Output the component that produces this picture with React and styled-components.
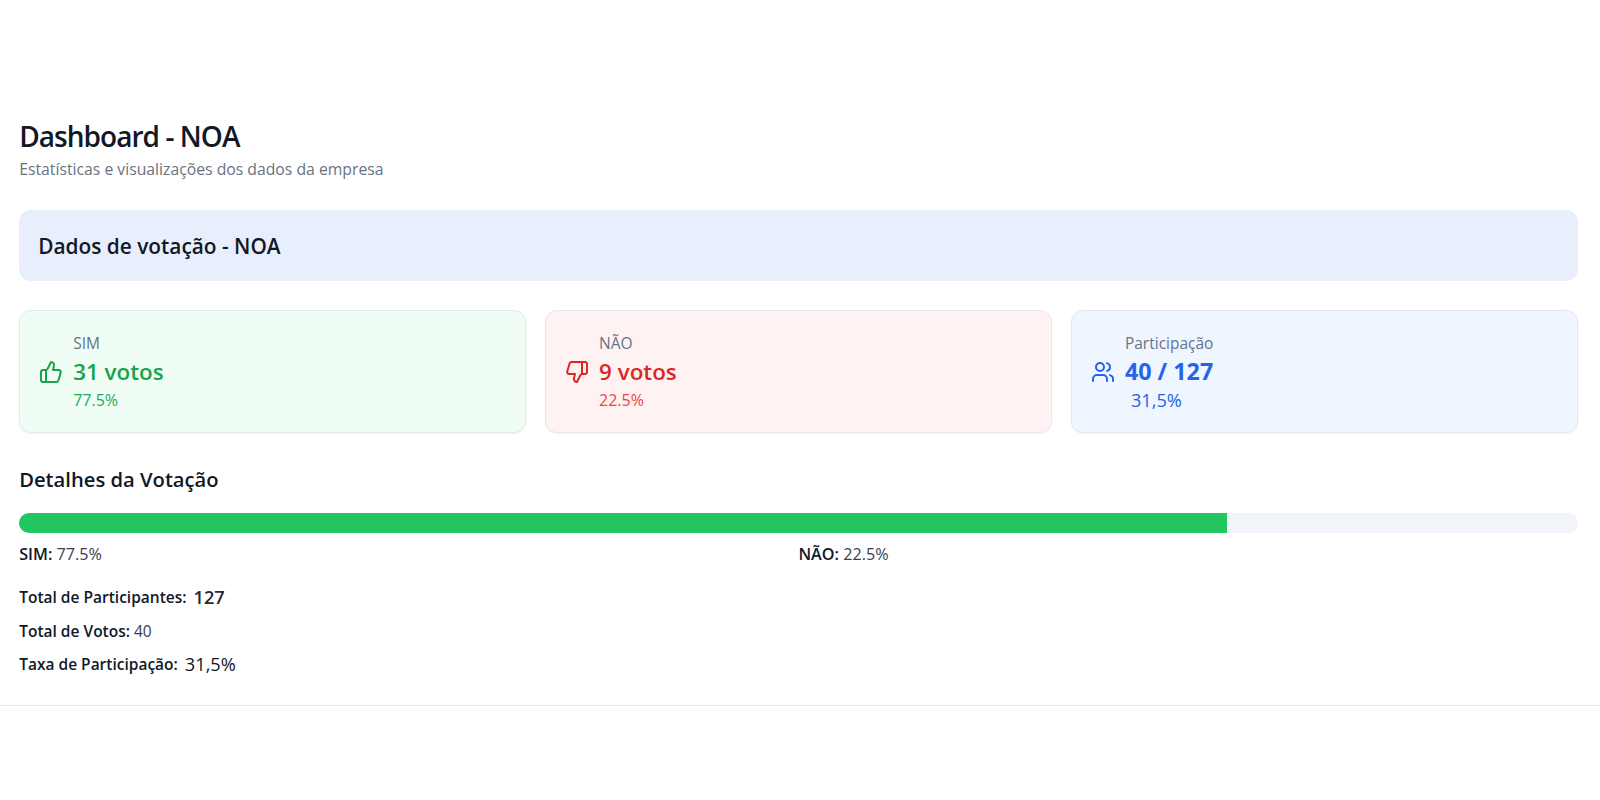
import React from 'react';
import styled, { createGlobalStyle } from 'styled-components';
import { ThumbsUp, ThumbsDown, Users } from 'lucide-react';

const GlobalStyle = createGlobalStyle`
    html, body {
        margin: 0;
        padding: 0;
        background: #fff;
        font-family: "Open Sans", "Noto Sans", sans-serif;
    }
`;

const Page = styled.div`
    padding-top: 118px;
    min-height: 800px;
    box-sizing: border-box;
`;

const Section = styled.section`
    padding: 0 22.4px 28px 19.2px;
    border-bottom: 1px solid #e5e7eb;
`;

const Title = styled.h1`
    margin: 0 0 4px;
    font-size: 28px;
    line-height: 36px;
    font-weight: 600;
    letter-spacing: -0.95px;
    color: #111827;
`;

const Subtitle = styled.p`
    margin: 0;
    font-size: 15.75px;
    line-height: 22px;
    color: #6b7280;
`;

const Banner = styled.div`
    margin-top: 30px;
    height: 71px;
    display: flex;
    align-items: center;
    padding: 0 19px;
    border-radius: 12px;
    background: #e8eefc;
`;

const BannerTitle = styled.h2`
    margin: 0;
    font-size: 20.85px;
    font-weight: 600;
    color: #111827;
`;

const Cards = styled.div`
    margin-top: 29px;
    display: grid;
    grid-template-columns: repeat(3, 1fr);
    gap: 19.2px;
`;

const Card = styled.div`
    height: 123px;
    box-sizing: border-box;
    display: flex;
    align-items: center;
    gap: 10px;
    padding: 0 19px;
    border: 1px solid #e2e8f0;
    border-radius: 12px;
    box-shadow: 0 1px 2px rgba(0, 0, 0, 0.05);
    background: ${p => p.$bg};
    color: ${p => p.$color};
`;

const CardBody = styled.div`
    display: flex;
    flex-direction: column;
`;

const CardLabel = styled.span`
    font-size: 15.5px;
    line-height: 21px;
    color: #64748b;
`;

const CardValue = styled.span`
    font-size: ${p => p.$size || 22.4}px;
    line-height: 35px;
    font-weight: ${p => p.$weight || 600};
`;

const CardPercent = styled.span`
    font-size: ${p => p.$size || 16}px;
    line-height: 22px;
    margin-left: ${p => p.$indent || 0}px;
    color: ${p => p.$color};
`;

const DetailsTitle = styled.h3`
    margin: 31px 0 0;
    font-size: 20.2px;
    line-height: 30px;
    font-weight: 600;
    color: #111827;
`;

const Track = styled.div`
    margin-top: 19px;
    height: 20px;
    border-radius: 10px;
    background: #f1f5f9;
    overflow: hidden;
`;

const Fill = styled.div`
    height: 100%;
    background: #22c55e;
`;

const Legend = styled.div`
    margin-top: 10px;
    display: grid;
    grid-template-columns: 1fr 1fr;
    font-size: 16.2px;
    line-height: 22px;
    color: #374151;
`;

const Strong = styled.strong`
    font-weight: 600;
    color: #111827;
`;

const Stats = styled.div`
    margin-top: 19px;
    display: flex;
    flex-direction: column;
    gap: 7.6px;
`;

const StatRow = styled.div`
    display: flex;
    align-items: center;
    gap: ${p => p.$gap ?? 7}px;
    height: 26px;
    font-size: 15.5px;
    color: #374151;
`;

const StatValue = styled.span`
    font-size: 18.2px;
    font-weight: ${p => p.$weight || 400};
    color: ${p => p.$color};
`;

const votes = { sim: 31, nao: 9, total: 127 };
const simPercent = (votes.sim / (votes.sim + votes.nao)) * 100;

export default function App() {
    return (
        <>
            <GlobalStyle />
            <Page>
                <Section>
                    <Title>Dashboard - NOA</Title>
                    <Subtitle>Estatísticas e visualizações dos dados da empresa</Subtitle>
                    <Banner>
                        <BannerTitle>Dados de votação - NOA</BannerTitle>
                    </Banner>
                    <Cards>
                        <Card $bg="#f0fdf4" $color="#16a34a">
                            <ThumbsUp size={24} strokeWidth={2} />
                            <CardBody>
                                <CardLabel>SIM</CardLabel>
                                <CardValue>31 votos</CardValue>
                                <CardPercent $color="#22a95a">77.5%</CardPercent>
                            </CardBody>
                        </Card>
                        <Card $bg="#fef2f2" $color="#dc2626">
                            <ThumbsDown size={24} strokeWidth={2} />
                            <CardBody>
                                <CardLabel>NÃO</CardLabel>
                                <CardValue>9 votos</CardValue>
                                <CardPercent $color="#ef4444">22.5%</CardPercent>
                            </CardBody>
                        </Card>
                        <Card $bg="#eff6ff" $color="#2563eb">
                            <Users size={24} strokeWidth={2} />
                            <CardBody>
                                <CardLabel>Participação</CardLabel>
                                <CardValue $weight={700} $size={23.3}>40 / 127</CardValue>
                                <CardPercent $color="#2563eb" $size={18.2} $indent={6}>31,5%</CardPercent>
                            </CardBody>
                        </Card>
                    </Cards>
                    <DetailsTitle>Detalhes da Votação</DetailsTitle>
                    <Track>
                        <Fill style={{ width: `${simPercent}%` }} />
                    </Track>
                    <Legend>
                        <div><Strong>SIM:</Strong> 77.5%</div>
                        <div><Strong>NÃO:</Strong> 22.5%</div>
                    </Legend>
                    <Stats>
                        <StatRow>
                            <Strong>Total de Participantes:</Strong>
                            <StatValue $weight={600} $color="#1f2937">{votes.total}</StatValue>
                        </StatRow>
                        <StatRow $gap={4}>
                            <Strong>Total de Votos:</Strong> 40
                        </StatRow>
                        <StatRow>
                            <Strong>Taxa de Participação:</Strong>
                            <StatValue $color="#111827">31,5%</StatValue>
                        </StatRow>
                    </Stats>
                </Section>
            </Page>
        </>
    );
}
